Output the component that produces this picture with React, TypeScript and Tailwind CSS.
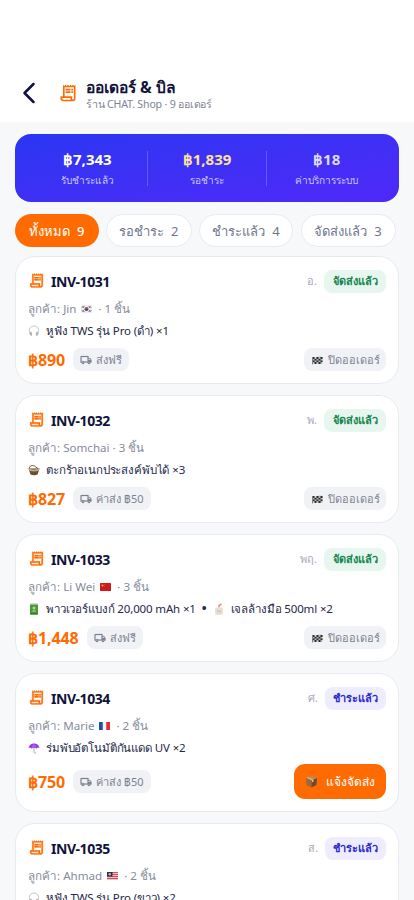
import type { ReactNode } from 'react';
import { MdOutlineReceiptLong, MdOutlineLocalShipping } from 'react-icons/md';

type Kind = 'headphones' | 'basket' | 'battery' | 'lotion' | 'umbrella';
type Country = 'kr' | 'cn' | 'fr' | 'my';

function Flag({ country }: { country: Country }) {
  return (
    <svg className="mr-[3px] ml-[5px] h-[8px] w-[11px] shrink-0" viewBox="0 0 22 16">
      {country === 'kr' && (
        <>
          <rect width="22" height="16" rx="1" fill="#ececef" />
          <path d="M7 8a4 4 0 0 1 8 0z" fill="#d33b4d" />
          <path d="M7 8a4 4 0 0 0 8 0z" fill="#284a9b" />
          <path d="M2 5l3-3M3.500 6l3-3M17 2l3 3M15.500 3l3 3M2 11l3 3M3.500 10l3 3M17 14l3-3M15.500 13l3-3" stroke="#333" strokeWidth="1.500" />
        </>
      )}
      {country === 'cn' && (
        <>
          <rect width="22" height="16" rx="1" fill="#cf1a20" />
          <circle cx="5" cy="5" r="2" fill="#f2b632" />
          <circle cx="9" cy="3" r=".7" fill="#f2b632" />
          <circle cx="9" cy="7" r=".7" fill="#f2b632" />
        </>
      )}
      {country === 'fr' && (
        <>
          <rect width="22" height="16" fill="#f3f3f5" />
          <rect width="7.500" height="16" fill="#20509b" />
          <rect x="14.500" width="7.500" height="16" fill="#dc3038" />
        </>
      )}
      {country === 'my' && (
        <>
          <rect width="22" height="16" fill="#e9c4c8" />
          <path d="M0 1h22M0 5h22M0 9h22M0 13h22" stroke="#cf4f5c" strokeWidth="2" />
          <rect width="11" height="9" fill="#23306f" />
          <circle cx="5.500" cy="4.500" r="2.500" fill="#e2b747" />
        </>
      )}
    </svg>
  );
}

function Product({ kind }: { kind: Kind }) {
  return (
    <svg className="mr-[6px] h-[12px] w-[12px] shrink-0" viewBox="0 0 24 24" fill="none">
      {kind === 'headphones' && (
        <>
          <path d="M4 17C0 7 6 2 12 2s12 5 8 15" stroke="#c3c5c9" strokeWidth="2" />
          <path d="M5 13c4 1 4 7 2 9-4-1-5-6-2-9zM19 13c-4 1-4 7-2 9 4-1 5-6 2-9z" fill="#aeb1b7" />
        </>
      )}
      {kind === 'basket' && (
        <>
          <path d="M3 10C2 3 9 2 13 4t8 6" stroke="#6b5138" strokeWidth="2" />
          <path d="M1 9h22l-4 12q-7 3-14 0z" fill="#5f4732" />
          <path d="M1 8q11 6 22 0l-1 5q-10 4-20 0z" fill="#c9a983" />
          <path d="M6 14l1 6M11 15v6M17 14l-1 6" stroke="#8f6f4c" />
        </>
      )}
      {kind === 'battery' && (
        <>
          <rect x="4" y="2" width="16" height="21" rx="2" fill="#4c9a35" />
          <rect x="4" y="1" width="16" height="3" rx="1" fill="#a7b6a0" />
          <rect x="4" y="20" width="16" height="3" rx="1" fill="#397b2a" />
          <path d="M12 7v6M9 10h6M9 16h6" stroke="#d7efc9" strokeWidth="1.800" />
        </>
      )}
      {kind === 'lotion' && (
        <>
          <rect x="4" y="9" width="16" height="15" rx="4" fill="#eadfd6" />
          <path d="M12 9V5l5-3" stroke="#e79583" strokeWidth="3" />
          <rect x="8" y="14" width="8" height="5" fill="#dccabd" />
        </>
      )}
      {kind === 'umbrella' && (
        <>
          <path d="M12 8v12q0 3 4 2" stroke="#a7a5ae" strokeWidth="1.800" />
          <path d="M1 12Q3 3 12 3t11 9q-3-2-6 1-5-3-10 0-3-3-6-1z" fill="#9136d8" />
          <path d="M7 13Q7 6 12 3q5 3 5 10-5-3-10 0z" fill="#ae58ec" />
        </>
      )}
    </svg>
  );
}

function Chequered() {
  return (
    <svg className="h-[9px] w-[11px] shrink-0" viewBox="0 0 22 18">
      <path d="M1 2q5 2 10 0t10 0v13q-5 2-10 0t-10 1z" fill="#b9b9b9" />
      <path d="M1 2h4v4H1zM9 2h4v4H9zM17 2h4v4h-4zM5 6h4v3H5zM13 6h4v3h-4zM1 9h4v3H1zM9 9h4v3H9zM17 9h4v3h-4zM5 12h4v4H5zM13 12h4v4h-4zM1 2h1v15H1z" fill="#2b2b2b" />
    </svg>
  );
}

function Parcel() {
  return (
    <svg className="h-[13px] w-[13px] shrink-0" viewBox="0 0 26 26">
      <path d="M2 6l11-4 11 4-11 5z" fill="#b98c60" />
      <path d="M2 6l11 5v14L3 20z" fill="#966a43" />
      <path d="M24 6l-11 5v14l10-5z" fill="#70492a" />
      <path d="M6 4.500l11 5v4l-3 1v-4l-11-5z" fill="#d9bd9c" />
    </svg>
  );
}

interface Order {
  id: string;
  day: string;
  name: string;
  flag?: Country;
  count: string;
  items: { kind: Kind; text: string }[];
  price: string;
  ship: string;
  closed: boolean;
}

const orders: Order[] = [
  { id: 'INV-1031', day: 'อ.', name: 'Jin', flag: 'kr', count: '1', items: [{ kind: 'headphones', text: 'หูฟัง TWS รุ่น Pro (ดำ) ×1' }], price: '฿890', ship: 'ส่งฟรี', closed: true },
  { id: 'INV-1032', day: 'พ.', name: 'Somchai', count: '3', items: [{ kind: 'basket', text: 'ตะกร้าอเนกประสงค์พับได้ ×3' }], price: '฿827', ship: 'ค่าส่ง ฿50', closed: true },
  { id: 'INV-1033', day: 'พฤ.', name: 'Li Wei', flag: 'cn', count: '3', items: [{ kind: 'battery', text: 'พาวเวอร์แบงก์ 20,000 mAh ×1' }, { kind: 'lotion', text: 'เจลล้างมือ 500ml ×2' }], price: '฿1,448', ship: 'ส่งฟรี', closed: true },
  { id: 'INV-1034', day: 'ศ.', name: 'Marie', flag: 'fr', count: '2', items: [{ kind: 'umbrella', text: 'ร่มพับอัตโนมัติกันแดด UV ×2' }], price: '฿750', ship: 'ค่าส่ง ฿50', closed: false },
  { id: 'INV-1035', day: 'ส.', name: 'Ahmad', flag: 'my', count: '2', items: [{ kind: 'headphones', text: 'หูฟัง TWS รุ่น Pro (ขาว) ×2' }], price: '฿790', ship: 'ส่งฟรี', closed: false },
];

function OrderCard({ order }: { order: Order }) {
  return (
    <article className={`flex shrink-0 flex-col rounded-[20px] border border-[#e8eaf0] bg-white px-[12px] pt-[12px] ${order.closed ? 'h-[128px]' : 'h-[139px]'}`}>
      <div className="flex h-[24px] items-center">
        <MdOutlineReceiptLong className="-mt-[2px] mr-[6px] h-[17px] w-[17px] text-[#ff6b00] [&>path:not([fill=none])]:stroke-[0.4]" />
        <span className="text-[14px] font-bold tracking-[-0.45px] text-[#10133a]">{order.id}</span>
        <span className="mr-[7px] ml-auto text-[11px] text-[#a6aab8]">{order.day}</span>
        <span className={`flex h-[23px] items-center justify-center rounded-[8px] text-[11px] font-bold ${order.closed ? 'w-[62px] bg-[#e7f6ee] text-[#168650]' : 'w-[61px] bg-[#ededff] text-[#302bd0]'}`}>
          {order.closed ? 'จัดส่งแล้ว' : 'ชำระแล้ว'}
        </span>
      </div>
      <div className="mt-[6px] flex h-[20px] items-center text-[11.6px] text-[#858b9c]">
        <span>ลูกค้า: {order.name}</span>
        {order.flag && <Flag country={order.flag} />}
        <span>&nbsp;· {order.count} ชิ้น</span>
      </div>
      <div className="mt-[2px] flex h-[20px] items-center text-[11.5px] tracking-[-0.14px] text-[#252847]">
        {order.items.map((item, i) => (
          <span key={item.kind} className="flex items-center">
            {i > 0 && <span className="mx-[6px] text-[13px] font-bold">•</span>}
            <Product kind={item.kind} />
            {item.text}
          </span>
        ))}
      </div>
      <div className={`flex items-center ${order.closed ? 'mt-[7px] h-[23px]' : 'mt-[6px] h-[35px]'}`}>
        <span className="mr-[8px] text-[16px] font-bold tracking-[-0.1px] text-[#ff6b00]">{order.price}</span>
        <span className="flex h-[23px] items-center gap-[4px] rounded-[8px] bg-[#f1f2f6] px-[7px] pt-px text-[11px] text-[#7d8293]">
          <MdOutlineLocalShipping className="-mt-px h-[12px] w-[12px] [&>path:not([fill=none])]:stroke-[0.4]" />
          {order.ship}
        </span>
        {order.closed ? (
          <span className="ml-auto flex h-[23px] w-[82px] items-center justify-center gap-[5px] rounded-[8px] bg-[#f1f2f6] pt-px pl-px text-[11px] text-[#7d8293]">
            <Chequered />
            ปิดออเดอร์
          </span>
        ) : (
          <button className="ml-auto flex h-[35px] w-[92px] items-center justify-center gap-[8px] rounded-[11px] bg-[#ff6b00] text-[12px] font-medium text-white">
            <Parcel />
            แจ้งจัดส่ง
          </button>
        )}
      </div>
    </article>
  );
}

function Stat({ value, label, color }: { value: string; label: ReactNode; color: string }) {
  return (
    <div className="flex flex-1 flex-col items-center pt-[2px]">
      <span className={`h-[22px] text-[15px] leading-[23px] font-bold ${color}`}>{value}</span>
      <span className="h-[20px] text-[10.1px] leading-[20px] text-[#c9c5ff]">{label}</span>
    </div>
  );
}

export default function App() {
  return (
    <main className="flex h-[900px] w-[414px] flex-col overflow-hidden bg-[#f7f8fa] font-['Noto_Sans',sans-serif] whitespace-nowrap">
      <header className="flex h-[122px] shrink-0 items-end bg-white pb-[10px] pl-[22px]">
        <svg className="mb-[8px] h-[22px] w-[14px]" viewBox="0 0 14 22" fill="none" stroke="#10133a" strokeWidth="2.500" strokeLinecap="round" strokeLinejoin="round">
          <path d="M11.500 2L2.500 11l9 9" />
        </svg>
        <MdOutlineReceiptLong className="mr-[8px] mb-[9px] ml-[22px] h-[20px] w-[20px] text-[#ff6b00]" />
        <div className="flex flex-col">
          <h1 className="h-[21px] text-[15.6px] leading-[22px] font-bold text-[#10133a]">ออเดอร์ &amp; บิล</h1>
          <p className="h-[15px] text-[10.6px] leading-[14px] tracking-[-0.18px] text-[#7d8293]">ร้าน CHAT. Shop · 9 ออเดอร์</p>
        </div>
      </header>
      <section className="mx-[15px] mt-[12px] flex h-[68px] shrink-0 items-center rounded-[16px] bg-linear-to-br from-[#2936f3] to-[#4f28f8] px-[13px]">
        <Stat value="฿7,343" label="รับชำระแล้ว" color="text-white" />
        <i className="h-[35px] w-px bg-white/20" />
        <Stat value="฿1,839" label="รอชำระ" color="text-[#ffe0a0]" />
        <i className="h-[35px] w-px bg-white/20" />
        <Stat value="฿18" label="ค่าบริการระบบ" color="text-[#dcdcff]" />
      </section>
      <nav className="mt-[12px] mb-[9px] ml-[15px] flex h-[33px] shrink-0 gap-[7.5px] text-[13px] text-[#70778c]">
        <span className="flex w-[83.5px] items-center justify-center gap-[7px] rounded-full bg-[#ff6b00] pt-[2px] font-medium text-white">ทั้งหมด <span>9</span></span>
        <span className="flex w-[85.5px] items-center justify-center gap-[7px] rounded-full border border-[#e8eaf0] bg-white pt-[2px]">รอชำระ <span>2</span></span>
        <span className="flex w-[94px] items-center justify-center gap-[7px] rounded-full border border-[#e8eaf0] bg-white pt-[2px]">ชำระแล้ว <span>4</span></span>
        <span className="flex w-[95px] items-center justify-center gap-[7px] rounded-full border border-[#e8eaf0] bg-white pt-[2px]">จัดส่งแล้ว <span>3</span></span>
      </nav>
      <div className="mx-[15px] flex flex-col gap-[11px]">
        {orders.map((order) => <OrderCard key={order.id} order={order} />)}
      </div>
    </main>
  );
}
